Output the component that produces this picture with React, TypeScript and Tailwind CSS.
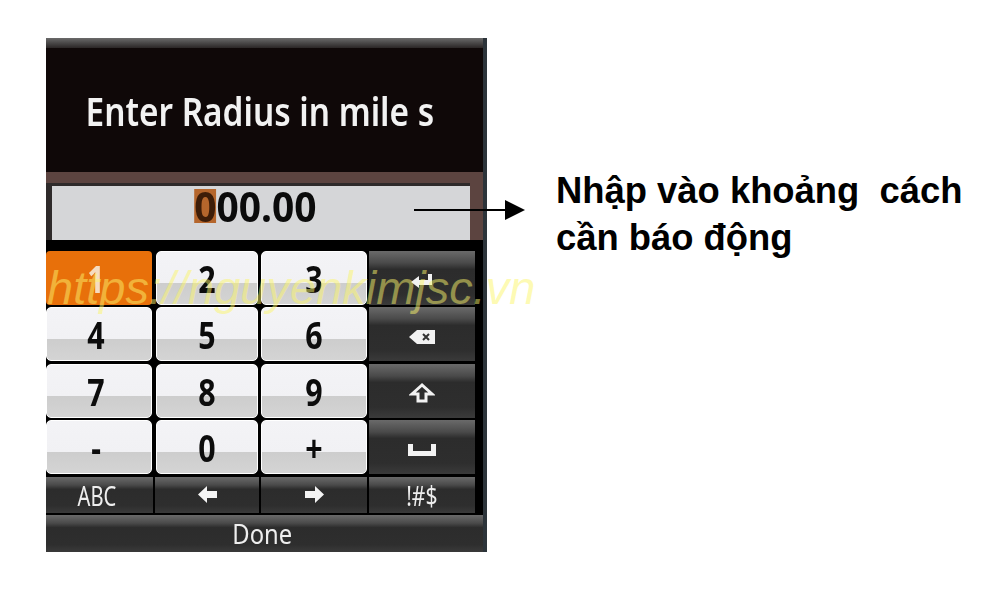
import { ReactNode } from 'react';

const numKeys = [
  ['1', '2', '3'],
  ['4', '5', '6'],
  ['7', '8', '9'],
  ['-', '0', '+'],
];

const NumKey = ({ label, active, first }: { label: string; active?: boolean; first?: boolean }) => (
  <div
    className={
      active
        ? 'flex h-[54px] items-center justify-center rounded-[4px] bg-[#e8700a] pr-[6px] text-[38px] font-bold leading-none text-[#f5dcc0]'
        : `flex h-[54px] items-center justify-center rounded-[5px] border border-white bg-[linear-gradient(#f3f3f6_0%,#f1f1f4_60%,#cdcdcd_60%,#d4d4d4_100%)] text-[38px] font-bold leading-none text-[#0c0c0c] ${first ? 'pr-[6px]' : ''}`
    }
  >
    <span className="inline-block scale-x-[0.8]">{label}</span>
  </div>
);

const DarkKey = ({ children, className }: { children: ReactNode; className: string }) => (
  <div
    className={`flex items-center justify-center bg-[linear-gradient(#6a6a6a_0%,#4a4a4a_22%,#2c2c2c_34%,#2e2e2e_80%,#3a3a3a_100%)] leading-none text-[#eeeeee] ${className}`}
  >
    {children}
  </div>
);

const EnterIcon = () => (
  <svg width="24" height="16" viewBox="0 0 24 16" fill="#f2f2f2">
    <path d="M1 9 9 3v4h9V1h4v11H9v3z" />
  </svg>
);

const BackspaceIcon = () => (
  <svg width="28" height="18" viewBox="0 0 28 18">
    <path d="M1 9 9 2h18v14H9z" fill="#f2f2f2" />
    <path d="m15 6 6 6m0-6-6 6" stroke="#333" strokeWidth="2" />
  </svg>
);

const ShiftIcon = () => (
  <svg width="26" height="22" viewBox="0 0 26 22" fill="none" stroke="#f2f2f2" strokeWidth="3">
    <path d="M13 3 3 12h6v7h8v-7h6z" />
  </svg>
);

const SpaceIcon = () => (
  <svg width="30" height="14" viewBox="0 0 30 14" fill="#f2f2f2">
    <path d="M1 1h5v7h18V1h5v12H1z" />
  </svg>
);

const SideArrow = ({ flip }: { flip?: boolean }) => (
  <svg width="21" height="17" viewBox="0 0 21 17" fill="#f4f4f4">
    <path d={flip ? 'M20 8.500 11 0v5H1v7h10v5z' : 'M1 8.500 10 0v5h10v7H10v5z'} />
  </svg>
);

export default function App() {
  return (
    <div className="relative h-[589px] w-[1000px] overflow-hidden bg-white pl-[46px] pt-[38px] font-['Noto_Sans',sans-serif]">
      <div className="flex items-start">
        {/* device screen */}
        <div className="flex h-[514px] w-[441px] flex-col border-r-[4px] border-[#2c343a] bg-[#060404] blur-[0.7px]">
          <div className="h-[10px] bg-[linear-gradient(#6a6a6a,#2a2626)]" />
          <div className="flex h-[124px] items-center justify-center bg-[#0f0808] pr-[9px] text-[39px] font-semibold leading-none text-[#f2f2f2]">
            <span className="inline-block scale-x-[0.855] whitespace-nowrap">Enter Radius in mile s</span>
          </div>
          <div className="bg-[#5c4440] pr-[13px] pt-[11px]">
            <div className="flex h-[57px] items-center justify-center border-l-[6px] border-t-[3px] border-[#2e2a2a] bg-[#d5d6d8] pb-[13px] pr-[12px] text-[41px] font-bold leading-none text-[#0b0b0b]">
              <span className="inline-block scale-x-[0.95]">
                <span className="inline-block h-[34px] bg-[#b5662c] leading-[34px] text-[#3d1d08]">0</span>00.00
              </span>
            </div>
          </div>
          <div className="flex flex-1 flex-col bg-black pt-[11px]">
            <div className="flex gap-[2px] pr-[8px]">
              <div className="grid w-[321px] grid-cols-[106px_102px_106px] gap-x-[3.5px] gap-y-[2.33px]">
                {numKeys.flat().map((k, i) => (
                  <NumKey key={k} label={k} active={k === '1'} first={i % 3 === 0} />
                ))}
              </div>
              <div className="flex w-[106px] flex-col gap-[2.33px]">
                <DarkKey className="h-[54px] pt-[6px]"><EnterIcon /></DarkKey>
                <DarkKey className="h-[54px] pt-[5px]"><BackspaceIcon /></DarkKey>
                <DarkKey className="h-[54px] pt-[4px]"><ShiftIcon /></DarkKey>
                <DarkKey className="h-[54px] pt-[7px]"><SpaceIcon /></DarkKey>
              </div>
            </div>
            <div className="mt-[3px] grid grid-cols-[107px_104px_106px_106px] gap-x-[2px] pr-[8px]">
              <DarkKey className="h-[36px] pr-[6px] text-[28px]">
                <span className="inline-block scale-x-[0.72]">ABC</span>
              </DarkKey>
              <DarkKey className="h-[36px]"><SideArrow /></DarkKey>
              <DarkKey className="h-[36px]"><SideArrow flip /></DarkKey>
              <DarkKey className="h-[36px] text-[28px]">
                <span className="inline-block scale-x-[0.75]">!#$</span>
              </DarkKey>
            </div>
            <DarkKey className="mt-[2px] h-[37px] pr-[5px] text-[28px]">
              <span className="inline-block scale-x-[0.85]">Done</span>
            </DarkKey>
          </div>
        </div>
        <div className="ml-[69px] mt-[129px] whitespace-pre font-['Liberation_Sans',sans-serif] text-[36.4px] font-bold leading-[47px] text-black">
          {'Nhập vào khoảng  cách\ncần báo động'}
        </div>
      </div>

      {/* watermark */}
      <div className="absolute left-[47px] top-[253px] font-['Liberation_Sans',sans-serif] text-[47px] italic text-[#fbf56a]/50">
        https://nguyenkimjsc.vn
      </div>

      {/* callout arrow */}
      <svg className="absolute left-[410px] top-[196px]" width="120" height="28" viewBox="0 0 120 28">
        <path d="M4 14h92" stroke="#000" strokeWidth="2" />
        <path d="M95 4v20l20-10z" fill="#000" />
      </svg>
    </div>
  );
}
